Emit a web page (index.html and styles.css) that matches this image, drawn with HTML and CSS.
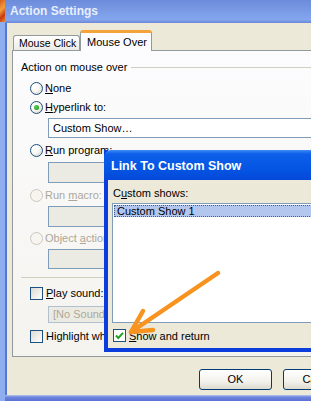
FILE: index.html
```html
<!DOCTYPE html>
<html>
<head>
<meta charset="utf-8">
<link rel="stylesheet" href="styles.css">
</head>
<body>
<div class="screen">
  <div class="edge"><div class="edge-top"></div></div>
  <div class="win">
    <div class="titlebar"><span class="title">Action Settings</span></div>
    <div class="client">
      <div class="tabs">
        <div class="tab">Mouse Click</div>
        <div class="tab active">Mouse Over</div>
      </div>
      <div class="panel">
        <div class="group-label"><span>Action on mouse over</span><span class="gline"></span></div>
        <div class="opt m7"><span class="radio"></span><span><u>N</u>one</span></div>
        <div class="opt m5"><span class="radio on"></span><span><u>H</u>yperlink to:</span></div>
        <div class="field white m4">Custom Show…</div>
        <div class="opt m5"><span class="radio"></span><span><u>R</u>un program:</span></div>
        <div class="field m5 h21"></div>
        <div class="opt m5 dis"><span class="radio"></span><span>Run <u>m</u>acro:</span></div>
        <div class="field m4 h21"></div>
        <div class="opt m4 dis"><span class="radio"></span><span>Object <u>a</u>ction:</span></div>
        <div class="field m4"></div>
        <div class="sep"></div>
        <div class="opt m8"><span class="check"></span><span><u>P</u>lay sound:</span></div>
        <div class="field small m6">[No Sound]</div>
        <div class="opt m6"><span class="check"></span><span>Highlight when mouse over</span></div>
      </div>
      <div class="buttons">
        <div class="btn">OK</div>
        <div class="btn">Cancel</div>
      </div>
    </div>
    <div class="bottom-frame"></div>
  </div>
</div>

<div class="dialog">
  <div class="dtitle">Link To Custom Show</div>
  <div class="dbody">
    <div class="dlabel">C<u>u</u>stom shows:</div>
    <div class="list">
      <div class="item">Custom Show 1</div>
    </div>
    <div class="drow">
      <span class="check checked"><svg width="11" height="11" viewBox="0 0 11 11"><path d="M2 5.5 L4.3 8 L9 2.8" fill="none" stroke="#21a121" stroke-width="2"/></svg></span>
      <span><u>S</u>how and return</span>
    </div>
  </div>
</div>

<svg class="arrow" width="311" height="401" viewBox="0 0 311 401">
  <g fill="none" stroke="#f7931e" stroke-width="4.5" stroke-linecap="round" stroke-linejoin="round">
    <path d="M218 273 L131 332"/>
    <path d="M143 311 L131 332 L153 330"/>
  </g>
</svg>
</body>
</html>
```

FILE: styles.css
```css
html, body {
  margin: 0;
  padding: 0;
}
body {
  width: 311px;
  height: 401px;
  overflow: hidden;
  position: relative;
  font-family: "Liberation Sans", Arial, sans-serif;
  font-size: 11px;
  color: #000;
  background: #7b98e0;
}
u { text-decoration: underline; text-underline-offset: 1px; }

.screen {
  display: flex;
  width: 311px;
  height: 401px;
  overflow: hidden;
}
.edge {
  width: 5px;
  flex: none;
  background: #8eaef0;
}
.edge-top {
  height: 22px;
  background: linear-gradient(135deg, #d8581c 0%, #f0a040 40%, #c83a10 70%, #e88a30 100%);
}
.win {
  flex: 1;
  display: flex;
  flex-direction: column;
  min-width: 0;
}
.titlebar {
  height: 23px;
  flex: none;
  background: linear-gradient(#6c8cdb 0%, #7898e4 40%, #84a6ee 85%, #6b86d6 100%);
  display: flex;
  align-items: center;
  padding-left: 5px;
}
.title {
  color: #e8eefc;
  font-weight: bold;
  font-size: 12px;
  margin-top: -1px;
}
.client {
  flex: 1;
  background: #ece9d8;
  border-left: 2px solid #5676d6;
  padding: 7px 0 0 5px;
  display: flex;
  flex-direction: column;
}
.bottom-frame {
  height: 6px;
  flex: none;
  background: linear-gradient(#b8c6ec 0, #6f86dc 2px, #5a70d6 100%);
}

.tabs {
  display: flex;
  align-items: flex-end;
  height: 20px;
  padding-left: 1px;
  position: relative;
  z-index: 2;
}
.tab {
  height: 15px;
  width: 67px;
  box-sizing: border-box;
  border: 1px solid #919b9c;
  border-bottom: none;
  border-radius: 3px 3px 0 0;
  background: linear-gradient(#ffffff, #ecebe6);
  padding: 1px 0 0 5px;
  line-height: 13px;
  font-size: 10.5px;
  white-space: nowrap;
  overflow: hidden;
  flex: none;
}
.tab.active {
  height: 21px;
  width: 72px;
  margin-bottom: -1px;
  background: #fcfcfe;
  border-top: 3px solid #f3a33a;
  padding: 2px 0 0 6px;
  line-height: 14px;
  font-size: 11px;
}

.panel {
  width: 330px;
  height: 307px;
  box-sizing: border-box;
  border: 1px solid #919b9c;
  background: linear-gradient(#fcfcfe, #f4f3ee);
  padding: 9px 0 0 0;
  display: flex;
  flex-direction: column;
}
.group-label {
  display: flex;
  align-items: center;
  height: 14px;
  padding-left: 8px;
}
.gline {
  flex: 1;
  height: 1px;
  background: #d0d0bf;
  margin-left: 4px;
}
.opt {
  display: flex;
  align-items: center;
  height: 14px;
  padding-left: 17px;
  white-space: nowrap;
}
.opt.dis { color: #aca899; }
.m4 { margin-top: 4px; }
.m5 { margin-top: 5px; }
.m6 { margin-top: 6px; }
.m7 { margin-top: 7px; }
.m8 { margin-top: 8px; }

.radio {
  width: 13px;
  height: 13px;
  box-sizing: border-box;
  border-radius: 50%;
  border: 1px solid #1c5180;
  background: radial-gradient(circle at 35% 35%, #ffffff 30%, #e2e0d6 75%, #d4d1c6 100%);
  margin-right: 2px;
  flex: none;
  position: relative;
}
.dis .radio { border-color: #cac8bb; background: #f6f5f0; }
.radio.on::after {
  content: "";
  position: absolute;
  left: 3px;
  top: 3px;
  width: 5px;
  height: 5px;
  border-radius: 50%;
  background: radial-gradient(circle at 40% 40%, #5fd35f, #21a121 70%);
}
.check {
  width: 13px;
  height: 13px;
  box-sizing: border-box;
  border: 1px solid #1c5180;
  background: linear-gradient(135deg, #dcdad2, #ffffff);
  margin-right: 3px;
  flex: none;
  display: flex;
  align-items: center;
  justify-content: center;
}
.check.checked { background: #ffffff; }

.field {
  margin-left: 35px;
  height: 20px;
  box-sizing: border-box;
  border: 1px solid #7f9db9;
  background: #ecebe3;
  padding-left: 4px;
  line-height: 18px;
  width: 290px;
  white-space: nowrap;
}
.field.h21 { height: 21px; }
.field.white { background: #ffffff; }
.field.small {
  height: 17px;
  line-height: 15px;
  color: #aca899;
  border-color: #b2bfcf;
}
.sep {
  margin-top: 8px;
  margin-left: 8px;
  height: 1px;
  background: #d0d0bf;
}

.buttons {
  display: flex;
  gap: 11px;
  padding-left: 187px;
  margin-top: 12px;
}
.btn {
  width: 73px;
  height: 21px;
  box-sizing: border-box;
  border: 1px solid #003c74;
  border-radius: 3px;
  background: linear-gradient(#ffffff, #f3f2ec 60%, #dedbcf);
  text-align: center;
  line-height: 19px;
  flex: none;
}

.dialog {
  position: absolute;
  left: 104px;
  top: 150px;
  width: 230px;
  height: 202px;
  box-sizing: border-box;
  border-left: 4px solid #0b3ddc;
  border-bottom: 4px solid #0b3ddc;
  background: #ece9d8;
  display: flex;
  flex-direction: column;
}
.dtitle {
  height: 30px;
  flex: none;
  margin-left: -4px;
  padding-left: 7px;
  border-radius: 7px 0 0 0;
  background: linear-gradient(#3d8cf5 0, #0d5ee8 4px, #0556e4 60%, #0448d8 100%);
  color: #ffffff;
  font-weight: bold;
  font-size: 12.5px;
  display: flex;
  align-items: center;
  padding-top: 2px;
  box-sizing: border-box;
}
.dbody {
  padding: 6px 0 0 4px;
  flex: 1;
  display: flex;
  flex-direction: column;
}
.dlabel {
  height: 14px;
  line-height: 14px;
  padding-left: 1px;
}
.list {
  margin-top: 3px;
  height: 120px;
  width: 230px;
  box-sizing: border-box;
  border: 1px solid #7f9db9;
  background: #ffffff;
  padding: 1px;
}
.item {
  height: 12px;
  line-height: 12px;
  background: #b3c7ee;
  outline: 1px dotted #4b5b80;
  outline-offset: -1px;
  padding-left: 3px;
}
.drow {
  margin-top: 6px;
  display: flex;
  align-items: center;
  height: 13px;
  padding-left: 1px;
}

.arrow {
  position: absolute;
  left: 0;
  top: 0;
  pointer-events: none;
}
```
